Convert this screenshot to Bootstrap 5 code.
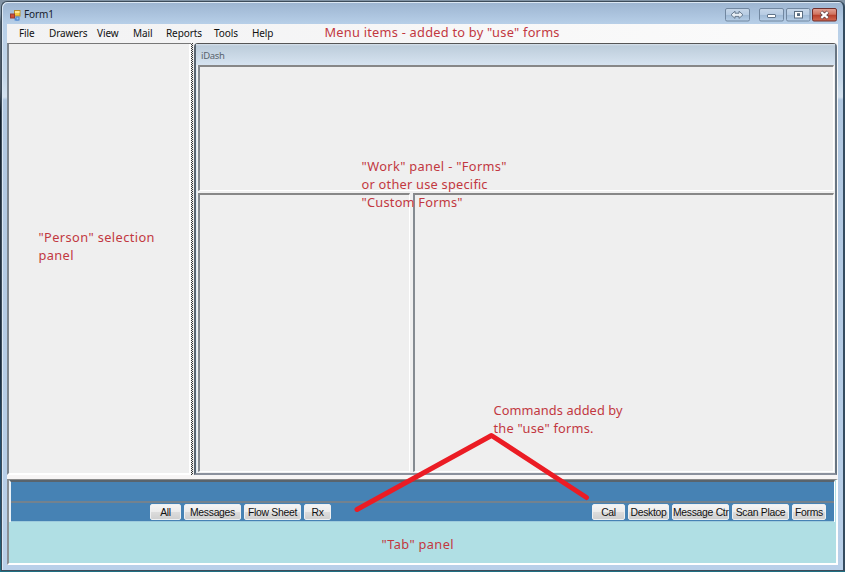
<!DOCTYPE html>
<html lang="en">
<head>
<meta charset="utf-8">
<meta name="viewport" content="width=device-width, initial-scale=1">
<title>Form1</title>
<link href="https://cdn.jsdelivr.net/npm/bootstrap@5.3.0/dist/css/bootstrap.min.css" rel="stylesheet">
<style>
body{width:845px;height:572px;overflow:hidden;padding:1px 0 1px 1px;background:linear-gradient(#8193a5 0 14px,#55636f 22px,#4c5864 90px,#101c27 112px,#25313e 230px,#17293b 370px,#204d70 430px,#23506f 520px,#1f7084);font-family:"Noto Sans","Open Sans",sans-serif}
.app-window{width:844px;height:570px;border:1px solid #3d4c5a;border-right:2px solid #354c60;border-radius:6px 6px 0 0;background:linear-gradient(#9cb4d0 0,#b7cfe8 22px,#c4d7e9 75px,#d4e2ef 95px,#b0c7e0 98px,#b9d0e9 100%);padding:0 5px 5px;box-shadow:inset 1px 1px #dce8f4}
.title-bar{height:22px;font-size:10px;color:#17202b;padding-left:3px}
.title-bar span{letter-spacing:-.1px;padding:3px 0 0 3px}
.caption-icons{margin:3px 1px 0 0}
.menu-strip{height:19px;background:linear-gradient(90deg,#f2f2f3,#fbfbfb);padding-left:12px;font-size:10px;color:#111}
.menu-strip a{color:#111;text-decoration:none;letter-spacing:-.1px;line-height:19px;flex:none}
.m1{width:30px}.m2{width:48px}.m3{width:36px}.m4{width:33px}.m5{width:48px}.m6{width:38px}
.client-area{height:432px;background:#f0f0f0;border-right:1px solid #f8f8f8}
.person-panel{width:184px;border:1px solid #777;border-left:2px solid #7e868e;border-right:0;border-bottom:2px solid #fff;background:#efefef;box-shadow:inset -2px 0 #fff}
.splitter-v{width:3px;border-right:1px solid #eee;background:repeating-conic-gradient(#333 0 25%,#e8e8e8 0 50%) 0 0/2px 2px}
.dash-window{border:2px solid #596470;border-top:1px solid #555;border-right:2px solid #687582;border-bottom:2px solid #8b919d;border-radius:4px 4px 0 0;background:#f0f0f0;padding:0 1px 1px 2px;box-shadow:inset 1px 1px #dbe7f2}
.dash-title{height:21px;margin:0 -1px 0 -2px;background:linear-gradient(#d8e2eb 0,#bdcddb 2px,#d6e3f0);font-size:9.5px;letter-spacing:-.3px;line-height:23px;padding-left:5px;color:#59636d}
.sunken{background:#efefef;border:1px solid #fff;border-top:2px solid #878787;border-left:2px solid #858b91}
.upper-panel{height:126px}
.lower-row{margin-top:2px;gap:3px}
.lower-left{width:212px}
.bottom-gap{height:4px;background:#f7f5f5}
.command-box{border:1px solid #8a8a8a;border-right:2px solid #fff;border-bottom:2px solid #fff;border-left:2px solid #8a8f94;height:86px;background:#b0dfe4}
.bars{margin:0 1px 0 0;border-left:2px solid #e9f2f8;border-top:2px solid #59646d;border-right:1px solid #fff}
.bar-top{height:19px;background:#4682b4}
.bar-commands{height:21px;background:#4682b4;border-top:2px solid #73828e;border-bottom:1px solid #9ecbdc;padding:1px 8px 0 139px}
.cmd-group{gap:3px}
.cmd{padding:0;height:16px;border:1px solid #eef0f2;border-radius:2px;background:linear-gradient(#f4f4f4,#ececec 48%,#dcdcdc 52%,#d0d0d0);color:#111;font:10.4px/13px "Liberation Sans",Arial,sans-serif;letter-spacing:-.3px;white-space:nowrap;flex:none}
.w31{width:31px}.w57{width:57px}.w27{width:27px}.w33{width:33px}.w41{width:41px}.w35{width:34px}
.notes{left:0;top:0;width:845px;height:572px;pointer-events:none}
.notes text{font-family:"Noto Sans","Open Sans",sans-serif;font-size:12.8px;fill:#c2383f}
</style>
<script src="https://cdn.jsdelivr.net/npm/bootstrap@5.3.0/dist/js/bootstrap.bundle.min.js"></script>
</head>
<body class="position-relative">
<main class="app-window d-flex flex-column">
  <header class="title-bar d-flex align-items-center flex-shrink-0">
    <svg width="11" height="11" viewBox="0 0 11 11" class="flex-shrink-0 mt-1" aria-hidden="true">
      <path d="M4.500 8h4v2.500h-4z" fill="#5e97dc"/><rect x="4.500" y=".5" width="5.500" height="5.500" fill="#f5ca42" stroke="#b98d2d"/><path d="M5 1h4.500v2H5z" fill="#ffe696"/><rect x=".5" y="4" width="4" height="4" fill="#d24f37" stroke="#963b34"/><rect x="6" y="7" width="3" height="3" fill="#98c2f2" stroke="#4c82c9"/>
    </svg>
    <span class="flex-grow-1">Form1</span>
    <svg class="caption-icons flex-shrink-0" width="113" height="14" viewBox="724 8 113 14" aria-label="Window controls">
      <defs><linearGradient id="capBlue" x2="0" y2="1"><stop stop-color="#c7d7e9"/><stop offset=".48" stop-color="#b7cce3"/><stop offset=".52" stop-color="#9fb9d5"/><stop offset="1" stop-color="#b6cee7"/></linearGradient><linearGradient id="capRed" x2="0" y2="1"><stop stop-color="#e2a397"/><stop offset=".46" stop-color="#d17460"/><stop offset=".54" stop-color="#b9412c"/><stop offset="1" stop-color="#d36a52"/></linearGradient></defs>
      <g fill="url(#capBlue)" stroke="#7187a0"><rect x="725.500" y="8.500" width="24" height="12.500" rx="1.500"/><rect x="759.500" y="8.500" width="24" height="12.500" rx="1.500"/><rect x="786.500" y="8.500" width="23.500" height="12.500" rx="1.500"/></g>
      <rect x="812.500" y="8.500" width="24" height="12.500" rx="1.500" fill="url(#capRed)" stroke="#702e2b"/>
      <path d="M731 14.800l4-3.600v2h4v-2l4 3.600-4 3.600v-2h-4v2z" fill="#e7eef5" stroke="#687b8f"/>
      <rect x="767.500" y="14.500" width="8" height="3" rx=".5" fill="#fff" stroke="#61758a"/>
      <rect x="794.500" y="11.500" width="8" height="6.500" fill="#fff" stroke="#596d81"/><rect x="797.500" y="13.700" width="2" height="1.800" fill="#9ab0c7" stroke="#596d81"/>
      <path d="M821 12l7 6M828 12l-7 6" stroke="#6c4949" stroke-width="4"/><path d="M821.300 12.200l6.400 5.600M827.700 12.200l-6.400 5.600" stroke="#fff" stroke-width="2.200"/>
    </svg>
  </header>
  <nav class="menu-strip d-flex flex-shrink-0">
    <a href="#" class="m1">File</a><a href="#" class="m2">Drawers</a><a href="#" class="m3">View</a><a href="#" class="m4">Mail</a><a href="#" class="m5">Reports</a><a href="#" class="m6">Tools</a><a href="#">Help</a>
  </nav>
  <section class="client-area d-flex flex-shrink-0">
    <div class="person-panel flex-shrink-0"></div>
    <div class="splitter-v flex-shrink-0"></div>
    <section class="dash-window d-flex flex-column flex-grow-1">
      <div class="dash-title flex-shrink-0">iDash</div>
      <div class="sunken upper-panel flex-shrink-0"></div>
      <div class="lower-row d-flex flex-grow-1">
        <div class="sunken lower-left flex-shrink-0"></div>
        <div class="sunken flex-grow-1"></div>
      </div>
    </section>
  </section>
  <div class="bottom-gap flex-shrink-0"></div>
  <section class="command-box flex-shrink-0">
    <div class="bars">
      <div class="bar-top"></div>
      <div class="bar-commands d-flex justify-content-between">
        <div class="d-flex cmd-group">
          <button class="btn cmd w31">All</button><button class="btn cmd w57">Messages</button><button class="btn cmd w57">Flow Sheet</button><button class="btn cmd w27">Rx</button>
        </div>
        <div class="d-flex cmd-group">
          <button class="btn cmd w33">Cal</button><button class="btn cmd w41">Desktop</button><button class="btn cmd w57">Message Ctr</button><button class="btn cmd w57">Scan Place</button><button class="btn cmd w35">Forms</button>
        </div>
      </div>
    </div>
  </section>
</main>
<svg class="notes position-absolute" viewBox="0 0 845 572">
  <text x="324.500" y="37" textLength="235">Menu items - added to by "use" forms</text>
  <text x="361.500" y="171" textLength="145">"Work" panel - "Forms"</text>
  <text x="361.500" y="189" textLength="126">or other use specific</text>
  <text x="361.500" y="207" textLength="101">"Custom Forms"</text>
  <text x="38.500" y="242" textLength="116">"Person" selection</text>
  <text x="38.500" y="260" textLength="35">panel</text>
  <text x="493.500" y="415" textLength="129">Commands added by</text>
  <text x="493.500" y="433" textLength="100">the "use" forms.</text>
  <text x="381.500" y="549" textLength="72">"Tab" panel</text>
  <path d="M357 509.500L491.500 435.500L586.500 497.500" fill="none" stroke="#eb1c24" stroke-width="5" stroke-linecap="round" stroke-linejoin="round"/>
</svg>
</body>
</html>
